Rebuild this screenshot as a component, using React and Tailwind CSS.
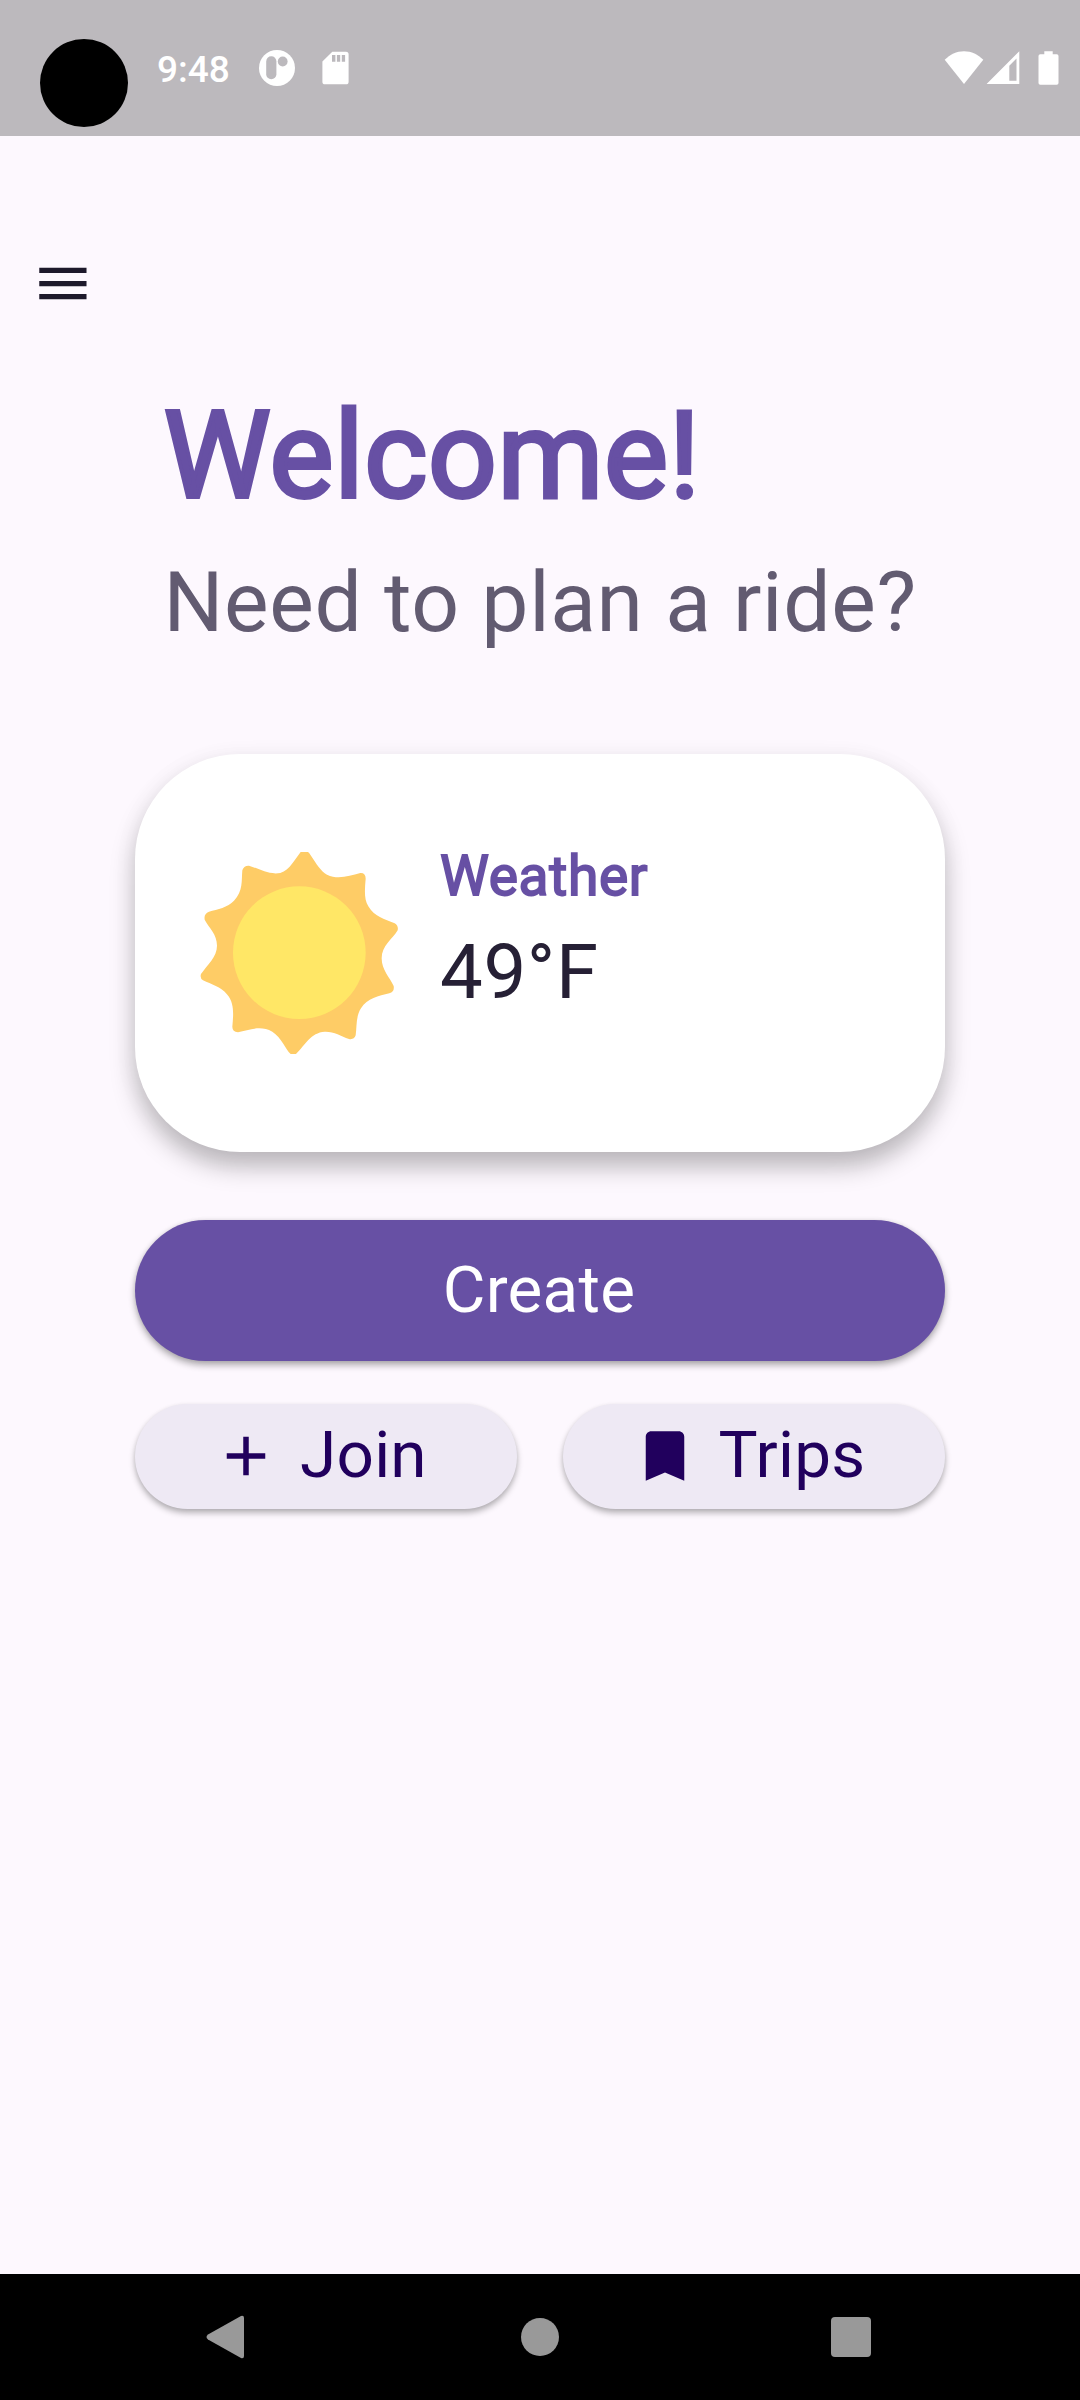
import React from "react";

function StatusBar() {
  return (
    <header className="flex h-[136px] shrink-0 items-start bg-[#bcb9bd] pl-10">
      <div className="mt-[39px] size-[88px] rounded-full bg-black" />
      <span className="ml-[29px] mt-[48px] text-[37px] leading-[44px] font-medium text-white">9:48</span>
      <svg className="ml-[29px] mt-[50px]" width="36" height="36" viewBox="0 0 36 36">
        <circle cx="18" cy="18" r="18" fill="#fff" />
        <rect x="7.2" y="6.3" width="10.2" height="23" rx="5.1" fill="#bcb9bd" />
        <circle cx="23.7" cy="11.5" r="4.9" fill="#bcb9bd" />
      </svg>
      <svg className="ml-[27px] mt-[51px]" width="27" height="34" viewBox="0 0 27 34">
        <path d="M10.3 .7H24a2.6 2.6 0 0 1 2.6 2.6v27.4a2.6 2.6 0 0 1-2.6 2.6H3A2.6 2.6 0 0 1 .4 30.7V10.5z" fill="#fff" />
        <path d="M10 4h3.4v6.7H10zM14.9 4h3.3v6.7h-3.3zM19.8 4h3.3v6.7h-3.3z" fill="#bcb9bd" />
      </svg>
      <div className="ml-auto mr-[21px] mt-[50px] flex items-start">
        <svg width="40" height="35" viewBox="0 0 40 35">
          <path d="M20 34 .7 9.8C6 4.5 12.5 1.2 20 1.2s14 3.3 19.3 8.6z" fill="#fff" />
        </svg>
        <svg className="ml-[2px]" width="34" height="35" viewBox="0 0 34 35">
          <path fillRule="evenodd" d="M33.3 1.3V34H.6zM30.5 8.5 23.3 15.8V30.7h7.2z" fill="#fff" />
        </svg>
        <svg className="ml-[18px]" width="21" height="35" viewBox="0 0 21 35">
          <path d="M6.3 1.2h8.4v3h3.9A1.8 1.8 0 0 1 20.5 6v27a1.8 1.8 0 0 1-1.8 1.8H2.3A1.8 1.8 0 0 1 .5 33V6a1.8 1.8 0 0 1 1.8-1.8h4z" fill="#fff" />
        </svg>
      </div>
    </header>
  );
}

function Sun() {
  return (
    <svg className="size-[240px] shrink-0" viewBox="0 0 720 720">
      <path
        fill="#fecc66"
        d="M362 66H384Q388 68 392 76C410 103 422 124 441 134C475 150 508 137 541 129Q557 128 557 146C554 180 552 208 565 229C583 260 613 268 644 280Q656 287 653 301C638 327 605 347 605 385C605 420 629 442 641 468Q644 486 628 490C596 498 562 505 543 535C527 560 531 588 527 616Q522 630 507 627C482 618 462 604 434 605C392 608 376 644 348 672H332C318 660 304 622 277 605C243 585 207 599 174 607Q157 605 157 590C160 556 164 520 142 494C122 470 94 463 69 451Q59 444 63 432C82 404 111 381 111 347C111 312 87 294 74 269Q71 251 87 245C113 237 143 233 162 212C190 184 184 152 187 121Q191 106 207 107C238 116 264 135 301 129C330 120 344 88 362 66Z"
      />
      <circle cx="358" cy="368" r="199" fill="#ffe766" />
    </svg>
  );
}

function WeatherCard() {
  return (
    <section className="mt-[102px] flex h-[398px] rounded-[105px] bg-white pl-[45px] pt-[76px] shadow-[0_15px_25px_rgba(0,0,0,0.25),0_4px_28px_rgba(0,0,0,0.04)]">
      <Sun />
      <div className="ml-5 mt-[11px] flex flex-col">
        <h2 className="h-[70px] text-[55.125px] leading-[70px] tracking-[0.656px] text-[#6750a4] [-webkit-text-stroke:1.8px_#6750a4]">
          Weather
        </h2>
        <p className="mt-[16px] text-[76.125px] leading-[90px] tracking-[0.656px] text-[#262035]">49°F</p>
      </div>
    </section>
  );
}

function Actions() {
  const tonal =
    "flex h-[105px] w-[382px] items-center rounded-full bg-[#eee9f4] text-[65.625px] leading-[76px] tracking-[0.2625px] text-[#21005d] shadow-[0_4px_6px_rgba(0,0,0,0.28),0_1px_4px_rgba(0,0,0,0.06)]";
  return (
    <>
      <button className="mt-[68px] flex h-[141px] w-full items-center justify-center rounded-full bg-[#6750a4] pb-[2px] pr-[2px] text-[65.625px] leading-[76px] tracking-[0.2625px] text-white shadow-[0_4px_7px_rgba(0,0,0,0.32),0_0_4px_rgba(0,0,0,0.08)]">
        Create
      </button>
      <div className="mt-[43px] flex justify-between">
        <button className={tonal + " pl-[78px]"}>
          <svg className="mb-[2px] size-[66px]" viewBox="0 0 24 24" fill="currentColor">
            <path d="M19 13h-6v6h-2v-6H5v-2h6V5h2v6h6v2z" />
          </svg>
          <span className="ml-[21px] pb-[3px]">Join</span>
        </button>
        <button className={tonal + " pl-[69px]"}>
          <svg className="mb-[2px] size-[66px]" viewBox="0 0 24 24" fill="currentColor">
            <path d="M17 3H7c-1.1 0-2 .9-2 2v16l7-3 7 3V5c0-1.1-.9-2-2-2z" />
          </svg>
          <span className="ml-[20.5px] pb-[3px]">Trips</span>
        </button>
      </div>
    </>
  );
}

function NavBar() {
  return (
    <nav className="flex h-[126px] shrink-0 items-center bg-black pl-[206px]">
      <svg width="39" height="44" viewBox="0 0 39 44">
        <path d="M35 .9Q38 0 38 3V41Q38 44 35 43.1L2 24.5Q-1 22 2 19.5Z" fill="#999" />
      </svg>
      <div className="ml-[276px] size-[38px] rounded-full bg-[#999]" />
      <div className="ml-[272px] size-10 rounded-[4px] bg-[#999]" />
    </nav>
  );
}

export default function App() {
  return (
    <div className="flex h-[2400px] w-[1080px] flex-col bg-[#fdf8fe] font-['Roboto',sans-serif]">
      <StatusBar />
      <button className="ml-[31px] mt-[116px] size-[63px] shrink-0" aria-label="Menu">
        <svg className="size-full" viewBox="-0.15 0 24 24" fill="#1d192b">
          <path d="M3 18h18v-2H3v2zm0-5h18v-2H3v2zm0-7v2h18V6H3z" />
        </svg>
      </button>
      <main className="mx-[135px] mt-[67px] flex flex-1 flex-col">
        <div className="pl-[28.5px]">
          <h1 className="h-[147px] whitespace-nowrap text-[120.75px] leading-[147px] tracking-[0.656px] text-[#6750a4] [-webkit-text-stroke:3.8px_#6750a4]">
            Welcome!
          </h1>
          <p className="mt-[25px] h-[98px] whitespace-nowrap text-[84px] leading-[98px] tracking-[0.656px] text-[#625b71]">
            Need to plan a ride?
          </p>
        </div>
        <WeatherCard />
        <Actions />
      </main>
      <NavBar />
    </div>
  );
}
